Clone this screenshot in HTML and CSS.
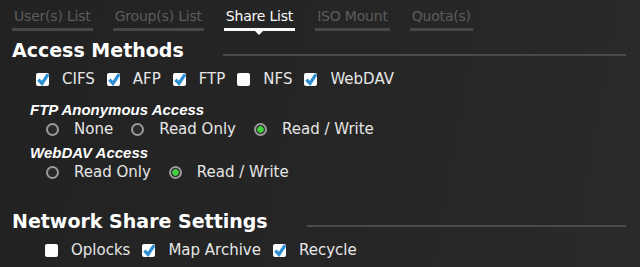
FILE: index.html
```html
<!DOCTYPE html>
<html lang="en">
<head>
    <meta charset="UTF-8">
    <title>Share List</title>
    <link rel="stylesheet" href="styles.css">
</head>
<body>
    <nav class="tabs">
        <a class="tab">User(s) List</a>
        <a class="tab">Group(s) List</a>
        <a class="tab active">Share List</a>
        <a class="tab">ISO Mount</a>
        <a class="tab">Quota(s)</a>
    </nav>

    <section class="group">
        <h2 class="title">Access Methods</h2>
        <div class="opts">
            <label class="opt"><span class="box on"></span>CIFS</label>
            <label class="opt"><span class="box on"></span>AFP</label>
            <label class="opt"><span class="box on"></span>FTP</label>
            <label class="opt"><span class="box"></span>NFS</label>
            <label class="opt"><span class="box on"></span>WebDAV</label>
        </div>

        <h3 class="sub">FTP Anonymous Access</h3>
        <div class="opts radios">
            <label class="opt"><span class="radio"></span>None</label>
            <label class="opt"><span class="radio"></span>Read Only</label>
            <label class="opt"><span class="radio on"></span>Read / Write</label>
        </div>

        <h3 class="sub sub-webdav">WebDAV Access</h3>
        <div class="opts radios">
            <label class="opt"><span class="radio"></span>Read Only</label>
            <label class="opt"><span class="radio on"></span>Read / Write</label>
        </div>
    </section>

    <section class="group second">
        <h2 class="title">Network Share Settings</h2>
        <div class="opts shifted">
            <label class="opt"><span class="box"></span>Oplocks</label>
            <label class="opt"><span class="box on"></span>Map Archive</label>
            <label class="opt"><span class="box on"></span>Recycle</label>
        </div>
    </section>
</body>
</html>
```

FILE: styles.css
```css
body {
    margin: 0;
    padding: 0 14px 0 12px;
    background: #242424;
    background-image: linear-gradient(100deg, #222 0%, #262626 60%, #2a2a2a 100%);
    color: #e8e8e8;
    font-family: "DejaVu Sans", sans-serif;
    font-size: 15px;
    height: 267px;
    overflow: hidden;
}

/* tabs */
.tabs {
    display: flex;
    gap: 20px;
    padding-top: 8px;
}
.tab {
    position: relative;
    padding: 0 2px 3px 2px;
    border-bottom: 3px solid #474747;
    color: #5d5d5d;
    font-size: 14px;
    letter-spacing: -0.2px;
    line-height: 17px;
}
.tab.active {
    color: #fafafa;
    border-bottom-color: #fafafa;
}
.tab.active::after {
    content: "";
    position: absolute;
    left: 50%;
    bottom: -7px;
    margin-left: -4px;
    border-left: 4px solid transparent;
    border-right: 4px solid transparent;
    border-top: 4px solid #fafafa;
}

/* section headings */
.title {
    display: flex;
    align-items: flex-end;
    gap: 39px;
    margin: 0;
    font-size: 19px;
    font-weight: bold;
    color: #fff;
    line-height: 24px;
}
.title::after {
    content: "";
    flex: 1;
    height: 2px;
    margin-bottom: 6px;
    background: #4a4a4a;
}
.group {
    margin-top: 7px;
}
.second {
    margin-top: 28px;
}

.sub {
    margin: 14px 0 0 18px;
    font-family: "Liberation Sans", sans-serif;
    font-size: 15px;
    font-weight: bold;
    font-style: italic;
    color: #fff;
    line-height: 16px;
}
.sub-webdav {
    margin-top: 7px;
}

/* options */
.opts {
    display: flex;
    gap: 12px;
    margin: 8px 0 0 24px;
    line-height: 18px;
}
.opts.radios {
    gap: 18px;
    margin: 2px 0 0 34px;
}
.opts.shifted {
    margin-left: 33px;
}
.opt {
    display: flex;
    align-items: center;
    gap: 13px;
    color: #e6e6e6;
}
.radios .opt {
    gap: 15px;
}

.box {
    width: 13px;
    height: 13px;
    border-radius: 2px;
    background: #fdfdfd;
}
.box.on {
    background: #fdfdfd url("data:image/svg+xml,%3Csvg xmlns='http://www.w3.org/2000/svg' width='13' height='13' viewBox='0 0 13 13'%3E%3Cpath d='M2.4 6.6 6 10.4 12 1.4' fill='none' stroke='%232a8fd2' stroke-width='3.2'/%3E%3C/svg%3E") no-repeat 0 0 / 13px 13px;
}

.radio {
    box-sizing: border-box;
    width: 13px;
    height: 13px;
    border: 2px solid #9a9a9a;
    border-radius: 50%;
    background: #2a2a2a;
}
.radio.on {
    background: radial-gradient(circle, #3fcf3f 0 3px, #2a2a2a 3.5px);
}
```
